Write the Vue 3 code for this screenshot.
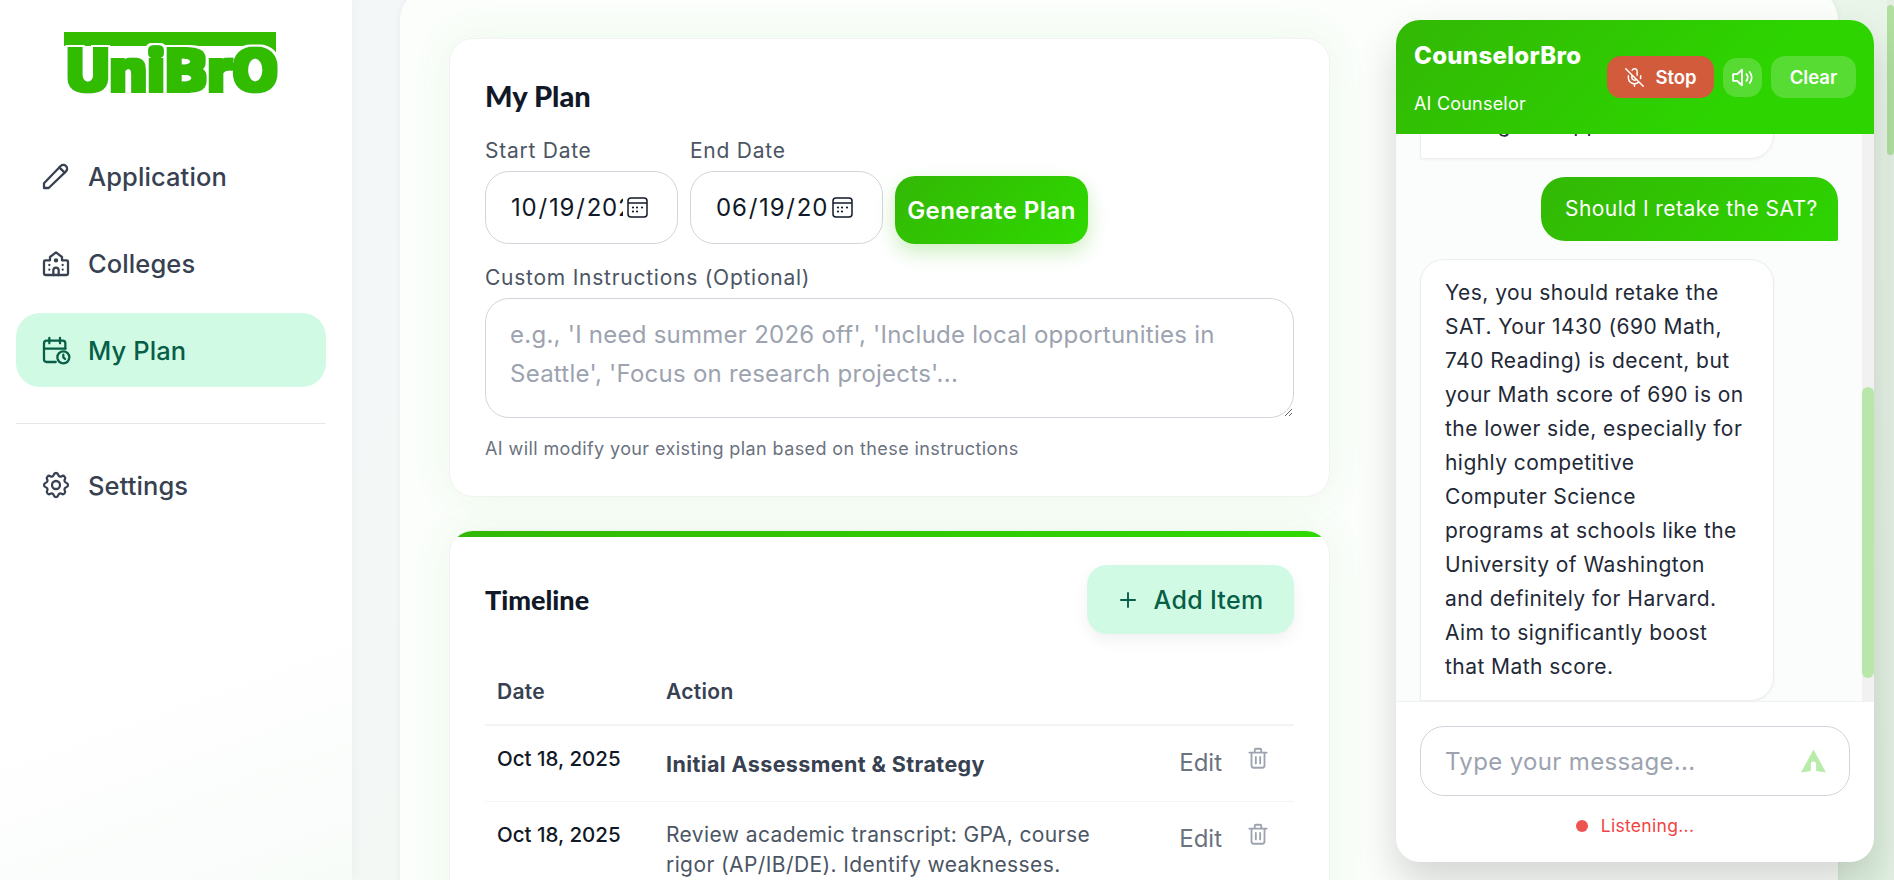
<script setup>
import { ref } from 'vue'
const nav = [
  { label: 'Application', icon: 'pencil' },
  { label: 'Colleges', icon: 'school' },
  { label: 'My Plan', icon: 'plan', active: true }
]
const startDate = ref('2025-10-19')
const endDate = ref('2026-06-19')
const rows = [
  { date: 'Oct 18, 2025', title: 'Initial Assessment & Strategy' },
  { date: 'Oct 18, 2025', text: 'Review academic transcript: GPA, course rigor (AP/IB/DE). Identify weaknesses.' }
]
const botLines = ['Yes, you should retake the', 'SAT. Your 1430 (690 Math,', '740 Reading) is decent, but', 'your Math score of 690 is on', 'the lower side, especially for', 'highly competitive', 'Computer Science', 'programs at schools like the', 'University of Washington', 'and definitely for Harvard.', 'Aim to significantly boost', 'that Math score.']
</script>

<template>
  <div class="page">
    <aside class="sidebar">
      <div class="logo">
        <svg width="220" height="64" viewBox="0 0 220 64">
          <defs>
            <filter id="logo-fx" x="-5%" y="-20%" width="110%" height="140%">
              <feMorphology in="SourceAlpha" operator="dilate" radius="3.600" result="halo" />
              <feFlood flood-color="#ffffff" />
              <feComposite in2="halo" operator="in" result="white" />
              <feMorphology in="SourceGraphic" operator="dilate" radius="1.800" result="bold" />
              <feMerge>
                <feMergeNode in="white" />
                <feMergeNode in="bold" />
              </feMerge>
            </filter>
          </defs>
          <path d="M0 0H212V24L190 14H0Z" fill="#33bc00" />
          <text x="2" y="58.500" textLength="212" lengthAdjust="spacingAndGlyphs" class="logo-text" filter="url(#logo-fx)">UniBrO</text>
        </svg>
      </div>
      <nav class="nav">
        <a v-for="item in nav" :key="item.label" class="nav-item" :class="{ active: item.active }">
          <svg class="nav-icon" viewBox="0 0 24 24">
            <template v-if="item.icon === 'pencil'">
              <path d="M3 21h3.500L19.500 8.500a2.800 2.800 0 0 0-4-4L3 17.500V21" />
              <path d="M14.500 5.500l4 4" />
            </template>
            <template v-else-if="item.icon === 'school'">
              <path d="M4 21h16a1 1 0 0 0 1-1V11a1 1 0 0 0-1-1h-3.500V7.500L12 4 7.500 7.500V10H4a1 1 0 0 0-1 1v9a1 1 0 0 0 1 1z" />
              <path d="M10 21v-3.500a2 2 0 0 1 4 0V21" />
              <circle cx="12" cy="10" r=".8" />
              <path d="M7 13.500v.01M7 17v.01M17 13.500v.01M17 17v.01" />
            </template>
            <template v-else>
              <path d="M11.800 21H5a2 2 0 0 1-2-2V7a2 2 0 0 1 2-2h12a2 2 0 0 1 2 2v4" />
              <circle cx="17.500" cy="17.500" r="4.500" />
              <path d="M15 3v4M7 3v4M3 11h16M17.500 15.500v2l1.300 1.300" />
            </template>
          </svg>
          <span>{{ item.label }}</span>
        </a>
      </nav>
      <div class="divider"></div>
      <a class="nav-item">
        <svg class="nav-icon" viewBox="0 0 24 24">
          <path d="M10.325 4.317c.426-1.756 2.924-1.756 3.350 0a1.724 1.724 0 0 0 2.573 1.066c1.543-.94 3.310.826 2.370 2.370a1.724 1.724 0 0 0 1.065 2.572c1.756.426 1.756 2.924 0 3.350a1.724 1.724 0 0 0-1.066 2.573c.94 1.543-.826 3.310-2.370 2.370a1.724 1.724 0 0 0-2.572 1.065c-.426 1.756-2.924 1.756-3.350 0a1.724 1.724 0 0 0-2.573-1.066c-1.543.94-3.310-.826-2.370-2.370a1.724 1.724 0 0 0-1.065-2.572c-1.756-.426-1.756-2.924 0-3.350a1.724 1.724 0 0 0 1.066-2.573c-.94-1.543.826-3.310 2.370-2.370 1 .608 2.296.07 2.572-1.065z" />
          <circle cx="12" cy="12" r="3" />
        </svg>
        <span>Settings</span>
      </a>
    </aside>

    <main class="main">
      <div class="shell">
        <section class="card plan-card">
          <h1 class="title">My Plan</h1>
          <div class="date-row">
            <label class="field">
              <span class="label">Start Date</span>
              <input v-model="startDate" class="date" type="date" />
            </label>
            <label class="field">
              <span class="label">End Date</span>
              <input v-model="endDate" class="date" type="date" />
            </label>
            <button class="generate">Generate Plan</button>
          </div>
          <label class="field instructions">
            <span class="label">Custom Instructions (Optional)</span>
            <textarea class="area" placeholder="e.g., 'I need summer 2026 off', 'Include local opportunities in Seattle', 'Focus on research projects'..."></textarea>
          </label>
          <p class="hint">AI will modify your existing plan based on these instructions</p>
        </section>

        <section class="card timeline-card">
          <div class="timeline-head">
            <h2 class="timeline-title">Timeline</h2>
            <button class="add">
              <svg class="plus" viewBox="0 0 18 18"><path d="M9 2v14M2 9h14" /></svg>
              Add Item
            </button>
          </div>
          <table class="table">
            <thead>
              <tr><th class="col-date">Date</th><th>Action</th><th class="col-act"></th></tr>
            </thead>
            <tbody>
              <tr v-for="(row, i) in rows" :key="i">
                <td class="cell-date">{{ row.date }}</td>
                <td class="cell-action">
                  <strong v-if="row.title">{{ row.title }}</strong>
                  <span v-else>{{ row.text }}</span>
                </td>
                <td class="cell-ops">
                  <div class="ops">
                    <span class="edit">Edit</span>
                    <svg class="trash" viewBox="0 0 24 24">
                      <path d="M4 7h16M9 7V4.500a1 1 0 0 1 1-1h4a1 1 0 0 1 1 1V7M6 7v12a2 2 0 0 0 2 2h8a2 2 0 0 0 2-2V7M10 11v6M14 11v6" />
                    </svg>
                  </div>
                </td>
              </tr>
            </tbody>
          </table>
        </section>
      </div>
    </main>

    <div class="page-scroll"><div class="page-thumb"></div></div>

    <section class="chat">
      <header class="chat-head">
        <div class="chat-id">
          <div class="chat-name">CounselorBro</div>
          <div class="chat-sub">AI Counselor</div>
        </div>
        <div class="chat-tools">
          <button class="tool stop">
            <svg class="tool-icon" viewBox="0 0 24 24">
              <path d="M2 2l20 20M18.890 13.230A7.120 7.120 0 0 0 19 12v-2M5 10v2a7 7 0 0 0 12 5M15 9.340V5a3 3 0 0 0-5.680-1.330M9 9v3a3 3 0 0 0 5.120 2.120M12 19v3" />
            </svg>
            Stop
          </button>
          <button class="tool sound">
            <svg class="tool-icon" viewBox="2 3 19 18">
              <path d="M11 5 6.500 9H3v6h3.500l4.500 4V5zM15 9a4.500 4.500 0 0 1 0 6M18 7a8 8 0 0 1 0 10" />
            </svg>
          </button>
          <button class="tool clear">Clear</button>
        </div>
      </header>
      <div class="messages">
        <div class="bubble bot">strong UW application.</div>
        <div class="bubble user">Should I retake the SAT?</div>
        <div class="bubble bot">
          <div v-for="line in botLines" :key="line">{{ line }}</div>
        </div>
        <div class="msg-track"><div class="msg-thumb"></div></div>
      </div>
      <div class="composer">
        <div class="input-wrap">
          <input class="chat-input" placeholder="Type your message..." />
          <svg class="send" viewBox="0 0 24 24">
            <path d="M12 1 L24 23 L14.500 21.500 V15 a2.500 2.500 0 0 0-5 0 V21.500 L0 23 Z" />
          </svg>
        </div>
        <div class="status"><span class="dot"></span>Listening...</div>
      </div>
    </section>
  </div>
</template>

<style>
html, body { margin: 0; overflow: hidden; }
</style>

<style scoped>
* { box-sizing: border-box; }
.page {
  position: relative;
  display: flex;
  width: 1894px;
  height: 880px;
  overflow: hidden;
  font-family: Inter, "Liberation Sans", sans-serif;
  background: linear-gradient(120deg, #f4f7f8 20%, #f1f9f1 60%, #dff0df 100%);
}
.sidebar {
  flex: 0 0 352px;
  padding: 32px 26px 0 16px;
  background: linear-gradient(160deg, #fff 72%, #f8fcf9);
  box-shadow: 2px 0 12px rgba(0, 0, 0, .03);
}
.logo { height: 64px; margin: 0 0 43px 48px; }
.logo svg { display: block; overflow: visible; }
.logo-text {
  font-family: Roboto, sans-serif;
  font-weight: 900;
  font-size: 60px;
  fill: #33bc00;
}
.nav { display: flex; flex-direction: column; gap: 13px; }
.nav-item {
  display: flex;
  align-items: center;
  gap: 16px;
  height: 74px;
  padding-left: 24px;
  border-radius: 24px;
  color: #374151;
  font-size: 25.500px;
  letter-spacing: .1px;
  font-weight: 500;
}
.nav-item.active { background: #d1fae5; color: #065f46; }
.nav-icon {
  width: 32px;
  height: 32px;
  fill: none;
  stroke: currentColor;
  stroke-width: 1.700;
  stroke-linecap: round;
  stroke-linejoin: round;
}
.divider { height: 1px; margin: 36px 0 24px; background: #e5e7eb; }
.main { flex: 1; min-width: 0; padding: 0 56px 0 48px; }
.shell {
  height: 920px;
  margin-top: -12px;
  padding: 50px 508px 0 49px;
  border-radius: 32px 32px 0 0;
  background: #fbfefb;
  box-shadow: 0 0 6px rgba(0, 0, 0, .05);
}
.card {
  position: relative;
  width: 881px;
  overflow: hidden;
  border: 1px solid #f0f3f0;
  border-radius: 24px;
  background: #fff;
  box-shadow: 0 0 40px rgba(51, 188, 0, .08);
}
.plan-card { height: 459px; padding: 35px 35px 0; }
.title {
  margin: 0 0 19px;
  color: #111827;
  font-size: 29px;
  font-weight: 900;
  line-height: 44px;
  font-family: Lato, sans-serif;
}
.date-row { display: flex; align-items: flex-end; gap: 12px; }
.field { display: flex; flex-direction: column; gap: 7px; }
.label { color: #4b5563; font-size: 21px; letter-spacing: .75px; line-height: 27px; white-space: nowrap; }
.date {
  width: 193px;
  height: 73px;
  padding: 0 29px 0 24px;
  border: 1px solid #d1d5db;
  border-radius: 24px;
  background: #fff;
  color: #111827;
  font: 400 24px Inter, sans-serif;
  letter-spacing: .8px;
  outline: none;
}
.date::-webkit-calendar-picker-indicator {
  width: 21px;
  height: 21px;
  margin: 0 0 0 4px;
  padding: 0;
  background: url("data:image/svg+xml,%3Csvg xmlns='http://www.w3.org/2000/svg' viewBox='0 0 21 21' fill='none'%3E%3Crect x='1' y='1' width='19' height='19' rx='3' stroke='%23111827' stroke-width='1.500'/%3E%3Cpath d='M1 6h19' stroke='%23111827' stroke-width='1.500'/%3E%3Cg fill='%23111827'%3E%3Ccircle cx='6' cy='10.500' r='1.100'/%3E%3Ccircle cx='10' cy='10.500' r='1.100'/%3E%3Ccircle cx='15' cy='10.500' r='1.100'/%3E%3Ccircle cx='6' cy='14.500' r='1.100'/%3E%3Ccircle cx='10' cy='14.500' r='1.100'/%3E%3C/g%3E%3C/svg%3E") center / 21px 21px no-repeat;
}
.generate {
  width: 193px;
  height: 68px;
  border: 0;
  border-radius: 20px;
  background: linear-gradient(135deg, #33b805, #2fd900);
  box-shadow: 0 8px 20px rgba(51, 188, 0, .25);
  color: #fff;
  font: 600 24px Inter, sans-serif;
  letter-spacing: .45px;
  white-space: nowrap;
  padding: 0;
}
.instructions { margin-top: 20px; }
.area {
  display: block;
  width: 809px;
  height: 120px;
  padding: 16px 24px;
  border: 1px solid #d1d5db;
  border-radius: 24px;
  color: #111827;
  font: 400 24px/39px Inter, sans-serif;
  letter-spacing: .25px;
  outline: none;
}
.area::placeholder, .chat-input::placeholder { color: #9ca3af; opacity: 1; }
.hint { margin: 19px 0 0; color: #6b7280; font-size: 18px; letter-spacing: .4px; line-height: 24px; }
.timeline-card { height: 400px; margin-top: 33px; padding: 34px 35px 0; }
.timeline-card::before {
  content: "";
  position: absolute;
  top: 0;
  left: 0;
  right: 0;
  height: 6px;
  background: linear-gradient(90deg, #33b805, #2fd900);
}
.timeline-head { display: flex; justify-content: space-between; align-items: center; }
.timeline-title { margin: 0; color: #111827; font: 900 27px Lato, sans-serif; }
.add {
  display: flex;
  align-items: center;
  justify-content: center;
  gap: 16px;
  width: 207px;
  height: 69px;
  padding: 0;
  border: 0;
  border-radius: 20px;
  background: #d1fae5;
  box-shadow: 0 6px 16px rgba(0, 0, 0, .06);
  color: #065f46;
  font: 500 25px Inter, sans-serif;
  letter-spacing: .3px;
}
.plus { width: 20px; height: 20px; fill: none; stroke: currentColor; stroke-width: 1.700; }
.table { width: 100%; margin-top: 19px; border-collapse: collapse; table-layout: fixed; }
th {
  height: 72px;
  padding: 6px 12px 0;
  border-bottom: 2px solid #f1f3f4;
  color: #374151;
  font-size: 21px;
  letter-spacing: .3px;
  font-weight: 600;
  text-align: left;
}
.col-date { width: 169px; }
.col-act { width: 140px; }
td { padding: 18px 12px 22px; border-bottom: 1px solid #f3f4f6; vertical-align: top; line-height: 30px; }
.cell-date { color: #111827; font-size: 20.500px; font-weight: 500; white-space: nowrap; }
.cell-action { color: #4b5563; font-size: 21px; letter-spacing: .4px; line-height: 30px; }
.cell-action strong { display: block; margin-top: 5px; color: #374151; font-size: 21.500px; letter-spacing: .4px; font-weight: 700; white-space: nowrap; }
.ops { display: flex; align-items: flex-start; justify-content: flex-end; gap: 23px; margin-right: 11px; }
.edit { margin-top: 4px; color: #6b7280; font-size: 24px; line-height: 30px; }
.trash { flex: none; width: 26px; height: 26px; margin-top: 1px; fill: none; stroke: #9ca3af; stroke-width: 1.700; stroke-linecap: round; stroke-linejoin: round; }
.page-scroll { position: absolute; top: 0; right: 0; bottom: 0; width: 7px; background: #e4efe3; }
.page-thumb { height: 150px; margin-top: 5px; border-radius: 4px; background: #b0dfa0; }
.chat {
  position: absolute;
  left: 1396px;
  top: 20px;
  width: 478px;
  height: 842px;
  display: flex;
  flex-direction: column;
  overflow: hidden;
  border-radius: 24px;
  background: #fff;
  box-shadow: 0 20px 40px rgba(0, 0, 0, .16);
}
.chat-head {
  flex: 0 0 114px;
  display: flex;
  justify-content: space-between;
  padding: 0 18px;
  background: linear-gradient(135deg, #33b805, #2dd400 70%);
  color: #fff;
}
.chat-id { padding-top: 20px; }
.chat-name { font-size: 24px; font-weight: 800; letter-spacing: .3px; line-height: 32px; white-space: nowrap; }
.chat-sub { margin-top: 20px; font-size: 18px; letter-spacing: .2px; line-height: 24px; }
.chat-tools { display: flex; align-items: flex-start; gap: 9px; padding-top: 36px; }
.tool {
  display: flex;
  align-items: center;
  justify-content: center;
  height: 42px;
  padding: 0;
  border: 0;
  border-radius: 14px;
  background: rgba(255, 255, 255, .2);
  color: #fff;
  font: 600 18.500px Inter, sans-serif;
}
.stop { width: 107px; gap: 10px; background: #d25b3c; }
.sound { width: 39px; height: 39px; margin-top: 2px; }
.clear { width: 85px; }
.tool-icon { width: 21px; height: 21px; fill: none; stroke: currentColor; stroke-width: 1.700; stroke-linecap: round; stroke-linejoin: round; }
.messages {
  position: relative;
  flex: 0 0 568px;
  display: flex;
  flex-direction: column;
  justify-content: flex-end;
  gap: 18px;
  overflow: hidden;
  padding: 0 36px 0 24px;
  background: #fbfcfc;
  border-bottom: 1px solid #f0f1f2;
}
.bubble { flex: none; color: #1f2937; font-size: 21px; letter-spacing: .45px; line-height: 34px; }
.bubble.bot {
  width: 354px;
  padding: 16px 24px;
  border: 1px solid #eceef0;
  border-radius: 24px 24px 24px 2px;
  background: #fff;
  box-shadow: 0 1px 3px rgba(0, 0, 0, .05);
  white-space: nowrap;
}
.bubble.user {
  align-self: flex-end;
  width: 297px;
  padding: 15px 24px;
  border-radius: 24px 24px 2px 24px;
  background: linear-gradient(135deg, #33b805, #2dd400);
  color: #fff;
  white-space: nowrap;
}
.msg-track { position: absolute; top: 0; right: 0; bottom: 0; width: 12px; background: #f1f1f1; }
.msg-thumb { height: 291px; margin-top: 253px; border-radius: 6px; background: #b9e6aa; }
.composer { flex: 1; padding: 24px 24px 0; }
.input-wrap { position: relative; }
.chat-input {
  display: block;
  width: 430px;
  height: 70px;
  padding: 0 70px 0 24px;
  border: 1px solid #d1d5db;
  border-radius: 24px;
  font: 400 24px Inter, sans-serif;
  letter-spacing: .35px;
  outline: none;
}
.send { position: absolute; top: 21px; right: 24px; width: 25px; height: 28px; fill: #b9ecab; }
.status {
  display: flex;
  align-items: center;
  justify-content: center;
  gap: 13px;
  margin-top: 18px;
  color: #ef4444;
  font-size: 17.500px;
  letter-spacing: .3px;
  line-height: 24px;
}
.dot { width: 12px; height: 12px; border-radius: 50%; background: #ef5350; }
</style>
